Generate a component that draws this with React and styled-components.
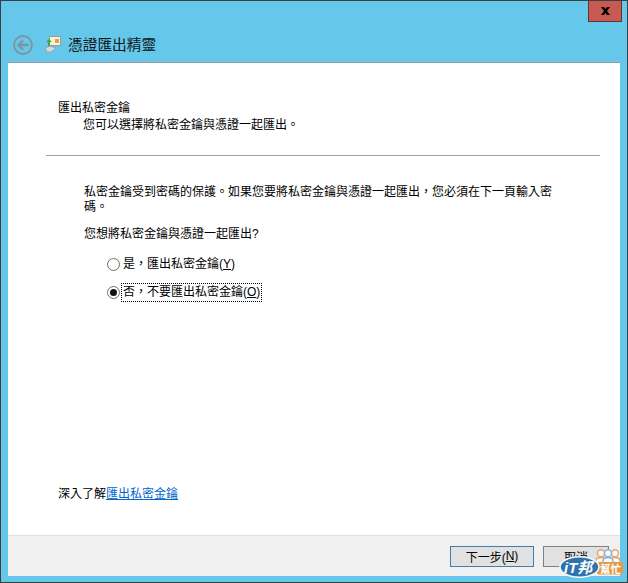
import React from "react";
import styled, { createGlobalStyle } from "styled-components";

const GlobalStyle = createGlobalStyle`
  html, body {
    margin: 0;
    padding: 0;
    background: #65c8ea;
  }
  body {
    font-family: "Liberation Sans", "Noto Sans CJK TC", sans-serif;
    font-size: 12px;
    color: #000;
  }
`;

const Window = styled.div`
  position: relative;
  box-sizing: border-box;
  width: 628px;
  height: 583px;
  display: flex;
  flex-direction: column;
  background: #65c8ea;
  border-style: solid;
  border-color: #3a3f42;
  border-width: 1px;
`;

const CaptionBar = styled.div`
  display: flex;
  justify-content: flex-end;
  height: 21px;
  padding-right: 5px;
`;

const CloseButton = styled.div`
  box-sizing: border-box;
  width: 34px;
  height: 21px;
  display: flex;
  align-items: center;
  justify-content: center;
  background: #c75a52;
  border: 1px solid #5e3432;
  border-top: none;
`;

const NavBar = styled.div`
  box-sizing: border-box;
  display: flex;
  align-items: center;
  height: 41px;
  padding: 4px 0 0 12px;
`;

const BackIcon = styled.svg`
  width: 20px;
  height: 20px;
  margin-right: 11px;
`;

const WizardIcon = styled.svg`
  width: 17px;
  height: 17px;
  margin-right: 7px;
`;

const Title = styled.div`
  font-size: 14.7px;
  color: #10181c;
  line-height: 20px;
`;

const Panel = styled.div`
  flex: 1;
  display: flex;
  flex-direction: column;
  margin: 0 7px 6px 7px;
  background: #fff;
  box-shadow: 0 -1px 0 #7fa3b6, 0 -2px 0 #8dbcd2;
`;

const Content = styled.div`
  flex: 1;
  display: flex;
  flex-direction: column;
`;

const Header = styled.div`
  padding: 38px 0 0 50px;
  height: 54px;
`;

const HeaderTitle = styled.div`
  line-height: 15px;
`;

const HeaderSub = styled.div`
  line-height: 19px;
  padding-left: 25px;
`;

const Rule = styled.hr`
  margin: 0 20px 0 38px;
  border: none;
  border-top: 1px solid #a0a0a0;
`;

const Body = styled.div`
  flex: 1;
  display: flex;
  flex-direction: column;
  padding: 29px 68px 0 76px;
`;

const Paragraph = styled.p`
  margin: 0 0 12px 0;
  line-height: 15px;
`;

const Options = styled.div`
  display: flex;
  flex-direction: column;
  gap: 8px;
  padding-left: 23px;
`;

const Option = styled.div`
  display: flex;
  align-items: center;
  height: 20px;
`;

const RadioDot = styled.span`
  box-sizing: border-box;
  width: 13px;
  height: 13px;
  margin-right: 2px;
  border-radius: 50%;
  border: 1px solid #6f6f6f;
  background: #fff;
  display: flex;
  align-items: center;
  justify-content: center;

  &::after {
    content: "";
    display: ${(p) => (p.$checked ? "block" : "none")};
    width: 7px;
    height: 7px;
    border-radius: 50%;
    background: #111;
  }
`;

const OptionLabel = styled.span`
  padding: 0 1px;
  line-height: 17px;
  outline: ${(p) => (p.$focused ? "1px dotted #000" : "none")};
`;

const Key = styled.span`
  text-decoration: underline;
`;

const MoreInfo = styled.div`
  margin: auto 0 33px 50px;
  line-height: 16px;
`;

const MoreLink = styled.a`
  color: #0066cc;
  text-decoration: underline;
`;

const Footer = styled.div`
  display: flex;
  justify-content: flex-end;
  align-items: center;
  gap: 9px;
  box-sizing: border-box;
  height: 41px;
  padding: 0 11px 0 0;
  background: #f0f0f0;
  border-top: 1px solid #dfdfdf;
`;

const FooterButton = styled.div`
  box-sizing: border-box;
  width: ${(p) => (p.$primary ? "84px" : "66px")};
  height: 21px;
  display: flex;
  align-items: center;
  justify-content: center;
  background: #e1e1e1;
  border: ${(p) => (p.$primary ? "1px solid #3c7fb1" : "1px solid #808080")};
`;

const Watermark = styled.svg`
  position: absolute;
  right: 4px;
  bottom: 4px;
  width: 64px;
  height: 29px;
`;

const WatermarkMain = styled.text`
  font-family: "Liberation Sans", "Noto Sans CJK TC", sans-serif;
  font-weight: 700;
  font-style: italic;
  font-size: 15px;
  fill: #fff;
`;

const WatermarkSub = styled.text`
  font-family: "Noto Sans CJK TC", sans-serif;
  font-weight: 700;
  font-size: 10.5px;
  fill: #fff;
`;

function Person({ x, color }) {
  return (
    <g fill="#f6f8fa" stroke={color} strokeWidth="1.400">
      <path d={`M${x - 5} 14v-2c0-2 2-3.500 5-3.500s5 1.500 5 3.500v2z`} />
      <circle cx={x} cy="4.300" r="3.500" />
    </g>
  );
}

export default function App() {
  return (
    <>
      <GlobalStyle />
      <Window>
        <CaptionBar>
          <CloseButton>
            <svg width="11" height="10" viewBox="0 0 11 10">
              <path d="M1 1h3l1.500 2L7 1h3L7 5l3 4H7L5.500 7 4 9H1l3-4z" fill="#000" />
            </svg>
          </CloseButton>
        </CaptionBar>
        <NavBar>
          <BackIcon viewBox="0 0 20 20">
            <circle cx="10" cy="10" r="9" fill="none" stroke="#7f939e" strokeWidth="1.800" />
            <path d="M15.500 10H6M10 5.500L5.500 10l4.500 4.500" fill="none" stroke="#7f939e" strokeWidth="2.400" />
          </BackIcon>
          <WizardIcon viewBox="0 0 17 17">
            <rect x="5.500" y="0.500" width="11" height="9" fill="#f6f3e6" stroke="#9d9d8c" />
            <rect x="11" y="3" width="4" height="4" fill="#e8a23c" />
            <path d="M5 3l3 3H6v4H4V6H2z" fill="#3fa843" />
            <path d="M1 12l5-2 6 2-5 4H3z" fill="#d5dade" stroke="#8b949a" strokeWidth="0.700" />
          </WizardIcon>
          <Title>憑證匯出精靈</Title>
        </NavBar>
        <Panel>
          <Content>
            <Header>
              <HeaderTitle>匯出私密金鑰</HeaderTitle>
              <HeaderSub>您可以選擇將私密金鑰與憑證一起匯出。</HeaderSub>
            </Header>
            <Rule />
            <Body>
              <Paragraph>
                私密金鑰受到密碼的保護。如果您要將私密金鑰與憑證一起匯出，您必須在下一頁輸入密碼。
              </Paragraph>
              <Paragraph>您想將私密金鑰與憑證一起匯出?</Paragraph>
              <Options>
                <Option>
                  <RadioDot />
                  <OptionLabel>
                    是，匯出私密金鑰(<Key>Y</Key>)
                  </OptionLabel>
                </Option>
                <Option>
                  <RadioDot $checked />
                  <OptionLabel $focused>
                    否，不要匯出私密金鑰(<Key>O</Key>)
                  </OptionLabel>
                </Option>
              </Options>
            </Body>
            <MoreInfo>
              深入了解<MoreLink>匯出私密金鑰</MoreLink>
            </MoreInfo>
          </Content>
          <Footer>
            <FooterButton $primary>
              下一步(<Key>N</Key>)
            </FooterButton>
            <FooterButton>取消</FooterButton>
          </Footer>
        </Panel>
        <Watermark viewBox="0 0 64 29">
          <Person x={42} color="#e8a566" />
          <Person x={56} color="#e8a566" />
          <Person x={49} color="#8fb0d4" />
          <rect x="38" y="13" width="26" height="12.500" rx="2" fill="#e59a48" />
          <ellipse cx="20.500" cy="18" rx="19.500" ry="10.300" fill="#2f73ae" stroke="#f4f8fb" strokeWidth="1.500" />
          <WatermarkMain x="5" y="23.500">iT邦</WatermarkMain>
          <WatermarkSub x="41" y="23.500">幫忙</WatermarkSub>
        </Watermark>
      </Window>
    </>
  );
}
